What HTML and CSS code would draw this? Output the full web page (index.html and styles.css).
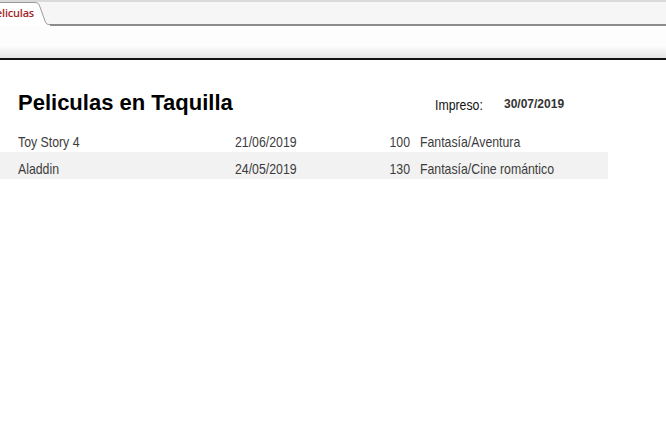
FILE: index.html
```html
<!DOCTYPE html>
<html lang="es">
<head>
<meta charset="utf-8">
<title>Peliculas</title>
<link rel="stylesheet" href="styles.css">
</head>
<body>
<div class="tabbar">
  <div class="tab"><span class="tab-label">Peliculas</span></div>
  <svg class="tab-edge" width="16" height="26" viewBox="0 0 16 26" aria-hidden="true">
    <path d="M0 2.5 L1 2.5 C4 2.5 5 4 6 7 L11 21 C12 24 13 24.5 16 24.5 L16 26 L0 26 Z" fill="#ffffff"/>
    <path d="M0 2.5 L1 2.5 C4 2.5 5 4 6 7 L11 21 C12 24 13 24.5 16 24.5" fill="none" stroke="#9a9a9a" stroke-width="1"/>
  </svg>
  <div class="tab-rest"></div>
</div>
<div class="ribbon"></div>
<main class="report">
  <div class="report-head">
    <h1 class="report-title">Peliculas en Taquilla</h1>
    <span class="printed-label"><span class="narrow">Impreso:</span></span>
    <span class="printed-date">30/07/2019</span>
  </div>
  <div class="rows">
    <div class="row">
      <span class="c-name"><span class="narrow">Toy Story 4</span></span>
      <span class="c-date"><span class="narrow">21/06/2019</span></span>
      <span class="c-num"><span class="narrow">100</span></span>
      <span class="c-genre"><span class="narrow">Fantasía/Aventura</span></span>
    </div>
    <div class="row alt">
      <span class="c-name"><span class="narrow">Aladdin</span></span>
      <span class="c-date"><span class="narrow">24/05/2019</span></span>
      <span class="c-num"><span class="narrow">130</span></span>
      <span class="c-genre"><span class="narrow">Fantasía/Cine romántico</span></span>
    </div>
  </div>
</main>
</body>
</html>
```
FILE: styles.css
```css
html, body {
  margin: 0;
  padding: 0;
  background: #ffffff;
}

body {
  font-family: "Liberation Sans", Arial, sans-serif;
  color: #3a3a3a;
}

.narrow {
  display: inline-block;
  transform: scaleX(0.82);
  transform-origin: left center;
  white-space: nowrap;
}

.tabbar {
  display: flex;
  height: 26px;
  background: #f6f6f6;
  border-top: 2px solid #dadada;
  box-sizing: border-box;
}

.tab {
  width: 34px;
  overflow: hidden;
  background: #ffffff;
  border-top: 1px solid #9a9a9a;
  display: flex;
  align-items: flex-start;
  justify-content: flex-end;
}

.tab-label {
  font-family: "Open Sans", "Liberation Sans", sans-serif;
  font-weight: 600;
  font-size: 11px;
  line-height: 14px;
  color: #a3252b;
  padding-top: 3px;
  padding-right: 0;
  letter-spacing: -0.2px;
  white-space: nowrap;
}

.tab-edge {
  display: block;
  margin-top: -2px;
  flex: none;
}

.tab-rest {
  flex: 1;
  border-bottom: 2px solid #8c8c8c;
}

.ribbon {
  height: 32px;
  background: linear-gradient(#fdfdfd 0, #fdfdfd 62%, #e4e4e4 100%);
  border-bottom: 2px solid #111111;
}

.report {
  padding-top: 30px;
}

.report-head {
  display: flex;
  align-items: baseline;
  padding-left: 18px;
  height: 35px;
}

.report-title {
  margin: 0;
  width: 417px;
  font-size: 22px;
  line-height: 26px;
  font-weight: bold;
  color: #000000;
}

.printed-label {
  width: 69px;
  font-size: 15px;
  color: #111111;
}

.printed-date {
  font-size: 12px;
  font-weight: bold;
  color: #333333;
  position: relative;
  top: -2px;
}

.rows {
  width: 608px;
}

.row {
  display: grid;
  grid-template-columns: 217px 140px 35px 1fr;
  padding: 8px 0 2px 18px;
  height: 17px;
  font-size: 15px;
  line-height: 17px;
  color: #3c3c3c;
}

.row.alt {
  background: #f2f2f2;
}

.c-num {
  text-align: right;
}

.c-num .narrow {
  transform-origin: right center;
}

.c-genre {
  padding-left: 10px;
}
```
